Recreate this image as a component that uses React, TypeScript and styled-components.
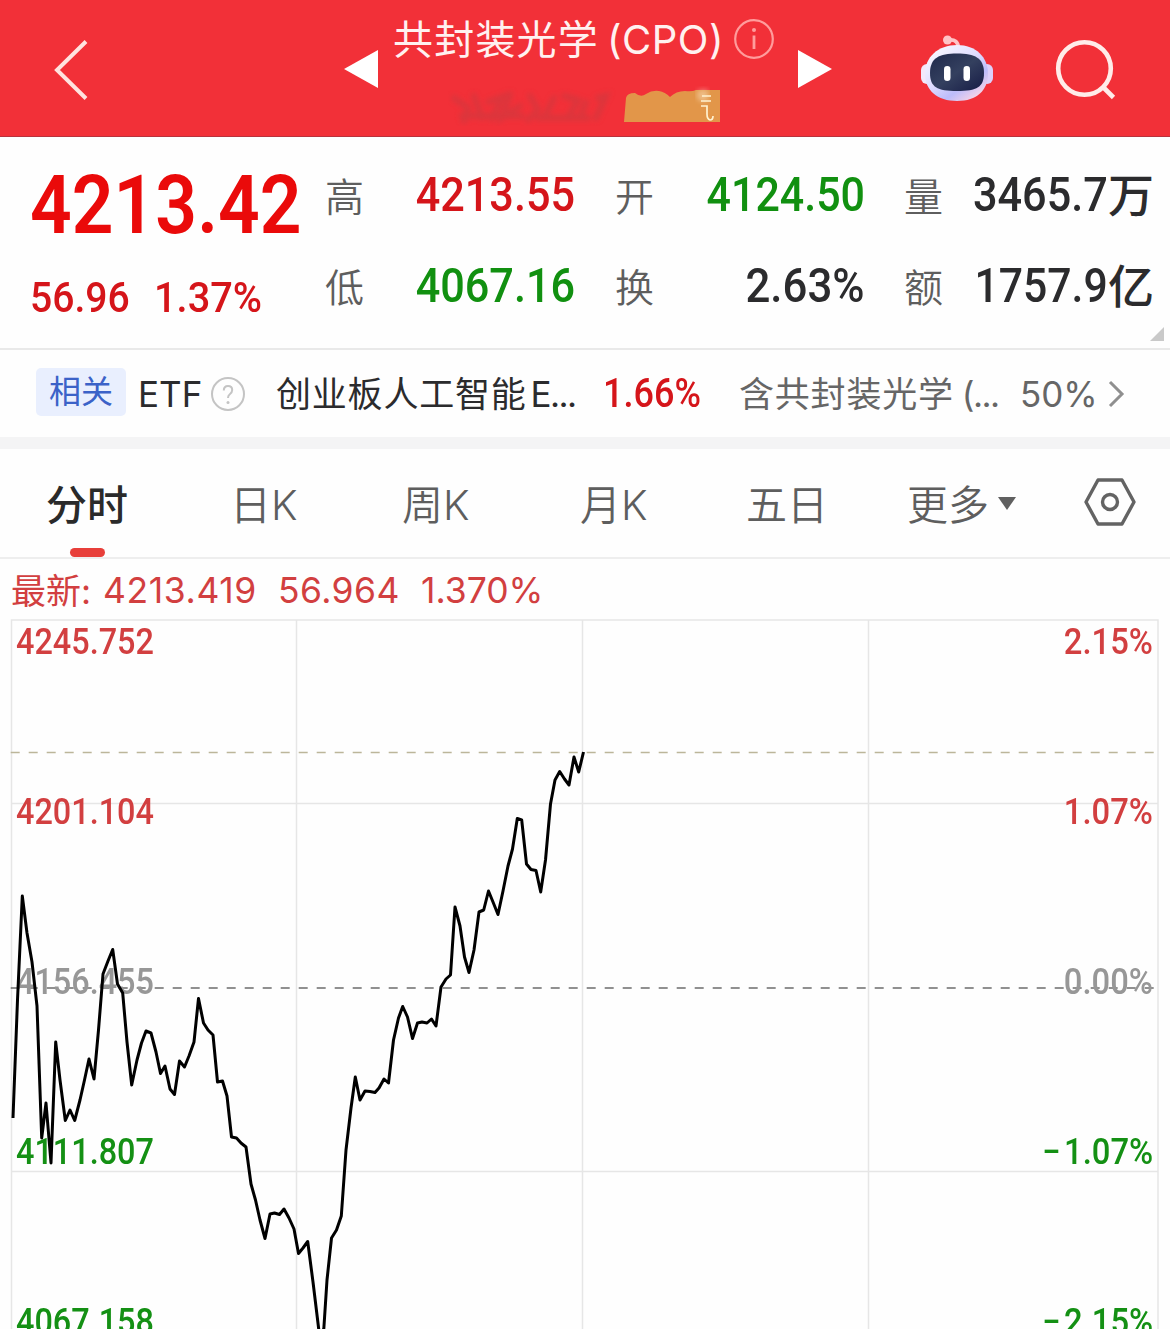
import React from "react";
import styled, { createGlobalStyle } from "styled-components";

const SANS = `Inter, "Noto Sans CJK SC", sans-serif`;
const DIN = `Roboto, "Noto Sans CJK SC", sans-serif`;

const C = {
  brand: "#f23038",
  up: "#ea0a0a",
  upDeep: "#d5151a",
  upSoft: "#d23f40",
  down: "#119010",
  ink: "#2b2b2d",
  label: "#5e5e5e",
  grid: "#e6e6e6",
};

const Global = createGlobalStyle`
  * { box-sizing: border-box; }
  body { margin: 0; background: #fff; }
`;

const Screen = styled.main`
  width: 1170px;
  height: 1329px;
  overflow: hidden;
  display: flex;
  flex-direction: column;
  background: #fefefe;
  font-family: ${SANS};
  color: ${C.ink};
  white-space: nowrap;
`;

/* Text squeezed horizontally toward one edge, for the narrow numerals. */
const Num = styled.span<{
  $size: number;
  $color: string;
  $squeeze?: number;
  $origin?: "left" | "right";
  $weight?: number;
}>`
  display: block;
  font-family: ${DIN};
  font-size: ${(p) => p.$size}px;
  line-height: 1;
  font-weight: ${(p) => p.$weight ?? 500};
  color: ${(p) => p.$color};
  transform: scaleX(${(p) => p.$squeeze ?? 1});
  transform-origin: ${(p) => p.$origin ?? "left"} center;
`;

/* ---------- header ---------- */

const Header = styled.header`
  flex: none;
  height: 137px;
  display: grid;
  grid-template-columns: 344px 35px 418px 35px 87px 136px 1fr;
  align-items: start;
  background: ${C.brand};
  border-bottom: 1px solid #b8323c;
`;

const IconSlot = styled.div<{ $top: number; $left?: number }>`
  padding: ${(p) => p.$top}px 0 0 ${(p) => p.$left ?? 0}px;
  svg { display: block; }
`;

const TitleBlock = styled.div`
  display: flex;
  flex-direction: column;
  padding: 16px 0 0 14px;
`;

const TitleRow = styled.div`
  display: flex;
  align-items: center;
  height: 48px;
  color: #fff1f0;
  svg { margin: -3px 0 0 10px; }
`;

const TitleText = styled.h1<{ $spacing: number; $gap?: number }>`
  margin: 0 0 0 ${(p) => p.$gap ?? 0}px;
  font-size: 40px;
  line-height: 48px;
  font-weight: 400;
  letter-spacing: ${(p) => p.$spacing}px;
`;

const SubRow = styled.div`
  display: flex;
  padding: 22px 0 0 55px;
`;

const Smudge = () => (
  <svg width="272" height="40" viewBox="0 0 272 40">
    <defs>
      <filter id="soft" x="-10%" y="-30%" width="120%" height="160%">
        <feGaussianBlur stdDeviation="2.6" />
      </filter>
      <filter id="faint">
        <feGaussianBlur stdDeviation="0.6" />
      </filter>
    </defs>
    <g fill="none" stroke="#c93a40" strokeWidth="6" opacity=".55" filter="url(#soft)" strokeLinecap="round">
      <path d="M6 12l14 10l-4 13M26 10l8 22M40 16l14-5l-10 22M62 8l-8 24l18-12M82 10l8 14l-10 10M98 28l8-16M116 10l14 4l-10 18M138 16l-6 16M150 12l8-2l-10 22M14 30h60M90 32h50" />
    </g>
    <path
      d="M176 36L178 12Q179 7 187 7Q193 12 198 8Q204 4 211 5Q217 6 222 11Q228 5 237 5Q244 6 248 4H272V36Z"
      fill="#e2964a"
      filter="url(#faint)"
    />
    <path d="M249 5q6-3 11-1v10q-6 4-11-2z" fill="#fff3dc" opacity=".4" filter="url(#soft)" />
    <path d="M254 10h9M253 15h10M253 20h6v8q0 5 3 6q3 0 3-4" fill="none" stroke="#fff1cf" strokeWidth="1.7" />
  </svg>
);

const Robot = () => (
  <svg width="75" height="72" viewBox="0 0 75 72">
    <defs>
      <linearGradient id="shell" x1="0" y1="0" x2=".8" y2="1">
        <stop offset="0" stopColor="#fff" />
        <stop offset=".5" stopColor="#dfdcff" />
        <stop offset=".75" stopColor="#bcbcfa" />
        <stop offset="1" stopColor="#ffd7e4" />
      </linearGradient>
      <linearGradient id="visor" x1="0" y1="0" x2="1" y2="1">
        <stop offset="0" stopColor="#20294c" />
        <stop offset=".5" stopColor="#34405f" />
        <stop offset="1" stopColor="#161b45" />
      </linearGradient>
    </defs>
    <circle cx="28.5" cy="7" r="4.5" fill="#ffc3c6" />
    <path d="M30 7q9-1 9.500 8" fill="none" stroke="#ffc3c6" strokeWidth="3.600" />
    <rect x="2" y="31" width="12" height="20" rx="6" fill="#f3e8fa" />
    <rect x="62" y="31" width="12" height="20" rx="6" fill="#dcd0fa" />
    <path d="M38 12C57 12 69 24 69 41C69 57 58 68 38 68C18 68 6 57 6 41C6 24 19 12 38 12Z" fill="url(#shell)" />
    <path d="M38 20.500C56 20.500 65 25 65 40C65 54 58 58 38 58C18 58 11 54 11 40C11 25 20 20.500 38 20.500Z" fill="url(#visor)" />
    <rect x="25" y="33" width="6.500" height="15" rx="3.250" fill="#fff" />
    <rect x="44.500" y="33" width="6.500" height="15" rx="3.250" fill="#fff" />
  </svg>
);

const InfoIcon = () => (
  <svg width="40" height="40" viewBox="0 0 40 40" fill="none" stroke="#ff9c9c" strokeWidth="2.200">
    <circle cx="20" cy="20" r="18.800" />
    <path d="M20 16.500V30" strokeWidth="2.800" />
    <circle cx="20" cy="11" r="2" fill="#ff9c9c" stroke="none" />
  </svg>
);

/* ---------- quote ---------- */

const Quote = styled.section`
  flex: none;
  height: 213px;
  display: grid;
  grid-template-columns: 325px 250px 290px 289px;
  border-bottom: 2px solid #e9e9e9;
  position: relative;
`;

const PriceCol = styled.div`
  padding: 27px 0 0 30px;
  display: flex;
  flex-direction: column;
  gap: 31px;
`;

const ChangeRow = styled.div`
  display: grid;
  grid-template-columns: 124px 1fr;
`;

const StatCol = styled.div<{ $indent?: number }>`
  padding: 34px 0 0 ${(p) => p.$indent ?? 0}px;
  display: grid;
  grid-auto-rows: 48px;
  row-gap: 43px;
  align-content: start;
`;

const Stat = styled.div`
  display: flex;
  justify-content: space-between;
  align-items: center;
`;

const StatLabel = styled.span`
  font-size: 39px;
  line-height: 48px;
  color: ${C.label};
  font-weight: 350;
  padding-top: 4px;
`;

const StatValue = styled.div`
  display: flex;
  align-items: center;
`;

const Unit = styled.span`
  font-size: 46px;
  line-height: 48px;
  font-weight: 500;
`;

const Corner = styled.span`
  position: absolute;
  right: 6px;
  bottom: 7px;
  border-left: 14px solid transparent;
  border-bottom: 14px solid #c9c9c9;
`;

/* ---------- related ---------- */

const Related = styled.section`
  flex: none;
  height: 99px;
  border-bottom: 12px solid #f4f4f5;
  display: grid;
  grid-template-columns: 36px 90px 12px 72px 66px 327px 136px 281px 88px 1fr;
  align-items: center;
`;

const Tag = styled.span`
  grid-column: 2;
  align-self: start;
  margin-top: 18px;
  height: 48px;
  border-radius: 5px;
  background: #e9effe;
  color: #3b62c8;
  font-size: 32px;
  line-height: 48px;
  text-align: center;
`;

const Txt = styled.span<{ $size: number; $color?: string; $spacing?: number; $weight?: number }>`
  font-size: ${(p) => p.$size}px;
  line-height: 48px;
  color: ${(p) => p.$color ?? C.ink};
  letter-spacing: ${(p) => p.$spacing ?? 0}px;
  font-weight: ${(p) => p.$weight ?? 400};
`;

const Tight = styled.span<{ $before?: number }>`
  margin-left: ${(p) => p.$before ?? 0}px;
  letter-spacing: -1.6px;
`;

/* ---------- tabs ---------- */

const Tabs = styled.nav`
  flex: none;
  height: 110px;
  display: grid;
  grid-template-columns: 46px 184px 172px 178px 166px 161px 177px 1fr;
  border-bottom: 2px solid #eeeeee;
`;

const Tab = styled.div<{ $active?: boolean }>`
  display: flex;
  align-items: center;
  height: 108px;
  padding-bottom: 2px;
  font-size: 41px;
  font-weight: ${(p) => (p.$active ? 500 : 350)};
  color: ${(p) => (p.$active ? "#2a2a2a" : "#5e5e5e")};
`;

const ActiveWrap = styled.div`
  position: relative;
  &::after {
    content: "";
    position: absolute;
    left: 24px;
    bottom: 0;
    width: 35px;
    height: 9px;
    border-radius: 5px;
    background: #e83f3a;
  }
`;

const Caret = styled.i`
  margin: 2px 0 0 9px;
  border: 9px solid transparent;
  border-top: 13px solid #606060;
  border-bottom: 0;
`;

/* ---------- chart ---------- */

const Latest = styled.div`
  flex: none;
  height: 60px;
  display: grid;
  grid-template-columns: 92px 175px 143px 1fr;
  align-items: center;
  padding: 3px 0 0 11px;
`;

const Chart = styled.section`
  flex: 1;
  position: relative;
  display: flex;
  justify-content: space-between;
  padding: 5px 17px 0 16px;
  overflow: hidden;
`;

const Axis = styled.div<{ $right?: boolean }>`
  position: relative;
  display: grid;
  grid-auto-rows: 170px;
  justify-items: ${(p) => (p.$right ? "end" : "start")};
`;

const Sign = styled.span`
  margin-right: 4px;
`;

const Plot = styled.svg`
  position: absolute;
  left: 0;
  top: 0;
`;

const series: [number, number][] = [
  [13, 1118], [17.5, 1000], [22.3, 896], [27, 933], [32, 962], [37, 1006], [41.7, 1138], [46, 1103], [51, 1163],
  [55.7, 1042], [60, 1080], [65.3, 1120.5], [70, 1110], [74.7, 1120.5], [80, 1100], [84.5, 1080], [89, 1059],
  [94, 1079], [98.5, 1030], [103, 974], [108, 961], [112.7, 949.5], [117.5, 984], [122.7, 993], [127, 1042],
  [131.7, 1085], [137, 1060], [141.5, 1043], [146, 1031], [151, 1033], [156, 1052], [160.5, 1073.5], [165, 1066],
  [170, 1089], [174.5, 1094.5], [179.5, 1061], [184.5, 1067], [189, 1056], [194, 1042], [198.5, 998.5],
  [203.5, 1023], [208, 1030], [213, 1035], [217.5, 1082], [222.5, 1081], [227, 1096], [231.5, 1137], [236.5, 1138],
  [241, 1143], [246, 1147], [251, 1184], [255.5, 1200], [260, 1220], [265, 1238.5], [270, 1214], [274.5, 1213],
  [279.5, 1214.5], [284, 1209], [289, 1218], [294, 1229], [298.5, 1253.5], [303, 1248], [307.7, 1241.5],
  [313, 1282], [318.7, 1329], [321.3, 1350], [323.8, 1329], [327, 1280], [331.5, 1238], [336.5, 1230],
  [341.3, 1216], [346, 1150], [351, 1108], [355.3, 1077], [360, 1100], [365, 1091], [370, 1091.5], [375, 1092.5],
  [379, 1088], [384, 1079], [388.5, 1083], [393.5, 1040], [398.5, 1018], [402.7, 1006.5], [407.5, 1017],
  [412.5, 1038.5], [417.5, 1023], [422, 1022], [427, 1023], [431.5, 1019], [436, 1026], [441, 987], [446, 979],
  [450.5, 975], [455, 907], [460, 926], [464.5, 957], [469, 972.5], [474, 950], [479, 912], [483.7, 910],
  [488.5, 891], [493, 902], [498, 914.5], [503, 891], [508, 866], [512.5, 849], [517.3, 818.5], [521.7, 820],
  [526.5, 864], [531, 869.5], [536, 870.5], [540.7, 892], [545.5, 860], [550.5, 804], [555, 780], [559.7, 771.5],
  [564.5, 779], [569, 785], [574, 757], [578.7, 772], [583.5, 752],
];

const levels = [
  { price: "4245.752", pct: "2.15%", color: C.upSoft },
  { price: "4201.104", pct: "1.07%", color: C.upSoft },
  { price: "4156.455", pct: "0.00%", color: "#979797" },
  { price: "4111.807", sign: "−", pct: "1.07%", color: "#149014" },
  { price: "4067.158", sign: "−", pct: "2.15%", color: "#149014" },
];

type StatItem = { label: string; value: string; unit?: string; color: string; squeeze: number };

const stats: StatItem[][] = [
  [
    { label: "高", value: "4213.55", color: C.upDeep, squeeze: 0.9 },
    { label: "低", value: "4067.16", color: C.down, squeeze: 0.9 },
  ],
  [
    { label: "开", value: "4124.50", color: C.down, squeeze: 0.895 },
    { label: "换", value: "2.63%", color: C.ink, squeeze: 0.912 },
  ],
  [
    { label: "量", value: "3465.7", unit: "万", color: C.ink, squeeze: 0.9 },
    { label: "额", value: "1757.9", unit: "亿", color: C.ink, squeeze: 0.89 },
  ],
];

export default function App() {
  return (
    <Screen>
      <Global />
      <Header>
        <IconSlot $top={39} $left={52}>
          <svg width="38" height="62" viewBox="0 0 38 62" fill="none" stroke="#ffe3df" strokeWidth="4">
            <path d="M34 2.500L5 31L34 59.500" />
          </svg>
        </IconSlot>
        <IconSlot $top={49}>
          <svg width="35" height="40" viewBox="0 0 35 40" fill="#fff">
            <path d="M0 20L34 1V39Z" />
          </svg>
        </IconSlot>
        <TitleBlock>
          <TitleRow>
            <TitleText $spacing={1.2}>共封装光学</TitleText>
            <TitleText as="span" $spacing={0.5} $gap={8}>(CPO)</TitleText>
            <InfoIcon />
          </TitleRow>
          <SubRow>
            <Smudge />
          </SubRow>
        </TitleBlock>
        <IconSlot $top={49}>
          <svg width="35" height="40" viewBox="0 0 35 40" fill="#fff">
            <path d="M35 20L1 1V39Z" />
          </svg>
        </IconSlot>
        <span />
        <IconSlot $top={33}>
          <Robot />
        </IconSlot>
        <IconSlot $top={39}>
          <svg width="64" height="62" viewBox="0 0 64 62" fill="none" stroke="#ffece9" strokeWidth="4.600">
            <circle cx="29.500" cy="29.500" r="26.300" />
            <path d="M48 48L58.500 58.500" />
          </svg>
        </IconSlot>
      </Header>

      <Quote>
        <PriceCol>
          <Num $size={82} $color={C.up} $squeeze={0.892} $weight={600}>4213.42</Num>
          <ChangeRow>
            <Num $size={42.5} $color={C.upDeep} $squeeze={0.92}>56.96</Num>
            <Num $size={42.5} $color={C.upDeep} $squeeze={0.935}>1.37%</Num>
          </ChangeRow>
        </PriceCol>
        {stats.map((col, i) => (
          <StatCol key={i} $indent={i === 0 ? 0 : i === 1 ? 40 : 39}>
            {col.map((s) => (
              <Stat key={s.label}>
                <StatLabel>{s.label}</StatLabel>
                <StatValue>
                  <Num $size={48} $color={s.color} $squeeze={s.squeeze} $origin="right">{s.value}</Num>
                  {s.unit && <Unit>{s.unit}</Unit>}
                </StatValue>
              </Stat>
            ))}
          </StatCol>
        ))}
        <Corner />
      </Quote>

      <Related>
        <Tag>相关</Tag>
        <span />
        <Txt $size={35}>ETF</Txt>
        <svg width="36" height="36" viewBox="0 0 36 36" fill="none" stroke="#c4c4c4" strokeWidth="2">
          <circle cx="18" cy="18" r="16" />
          <path d="M13.800 14.500q0-4.500 4.200-4.500q4.200 0 4.200 4q0 2.500-2.400 4.200q-1.800 1.300-1.800 3.800" />
          <circle cx="18" cy="26.500" r="1.500" fill="#c4c4c4" stroke="none" />
        </svg>
        <Txt $size={35} $spacing={0.8}>
          创业板人工智能<Tight $before={4}>E...</Tight>
        </Txt>
        <Num $size={40} $color={C.upDeep} $squeeze={0.9}>1.66%</Num>
        <Txt $size={35} $spacing={0.8} $color="#666">
          含共封装光学<Tight $before={8}>(...</Tight>
        </Txt>
        <Txt $size={35} $color="#666">50%</Txt>
        <svg width="18" height="30" viewBox="0 0 18 30" fill="none" stroke="#8f8f8f" strokeWidth="3">
          <path d="M2 3L14 15L2 27" />
        </svg>
      </Related>

      <Tabs>
        <span />
        <ActiveWrap>
          <Tab $active>分时</Tab>
        </ActiveWrap>
        <Tab>日K</Tab>
        <Tab>周K</Tab>
        <Tab>月K</Tab>
        <Tab>五日</Tab>
        <Tab>
          更多
          <Caret />
        </Tab>
        <Tab>
          <svg width="52" height="48" viewBox="0 0 52 48" fill="none" stroke="#636363" strokeWidth="3.400">
            <path d="M14 2H38L50 24L38 46H14L2 24Z" strokeLinejoin="round" />
            <circle cx="26" cy="24" r="7.500" />
          </svg>
        </Tab>
      </Tabs>

      <Latest>
        <Txt $size={35} $color={C.upSoft}>最新:</Txt>
        <Txt $size={35.5} $spacing={0.6} $color={C.upSoft}>4213.419</Txt>
        <Txt $size={35.5} $spacing={0.4} $color={C.upSoft}>56.964</Txt>
        <Txt $size={35.5} $color={C.upSoft}>1.370%</Txt>
      </Latest>

      <Chart>
        <Plot width="1170" height="710" viewBox="0 619 1170 710" fill="none">
          <g stroke={C.grid} strokeWidth="1.500">
            <path d="M11.500 1329V620H1158V1329M296.500 620V1329M582.500 620V1329M868.500 620V1329M11 803.500H1158M11 1171.500H1158" />
          </g>
          <path d="M10.700 752.500H1158" stroke="#bcb69a" strokeWidth="1.500" strokeDasharray="9 9" />
          <path d="M10.700 988H1158" stroke="#6c6c6c" strokeWidth="1.500" strokeDasharray="9 9" />
        </Plot>
        <Axis>
          {levels.map((l) => (
            <Num key={l.price} $size={36} $color={l.color} $squeeze={0.9}>{l.price}</Num>
          ))}
        </Axis>
        <Axis $right>
          {levels.map((l) => (
            <Num key={l.price} $size={36} $color={l.color} $squeeze={0.91} $origin="right">
              {l.sign && <Sign>{l.sign}</Sign>}
              {l.pct}
            </Num>
          ))}
        </Axis>
        <Plot width="1170" height="710" viewBox="0 619 1170 710" fill="none">
          <polyline points={series.map((p) => p.join(",")).join(" ")} stroke="#000" strokeWidth="3" strokeLinejoin="round" />
        </Plot>
      </Chart>
    </Screen>
  );
}
